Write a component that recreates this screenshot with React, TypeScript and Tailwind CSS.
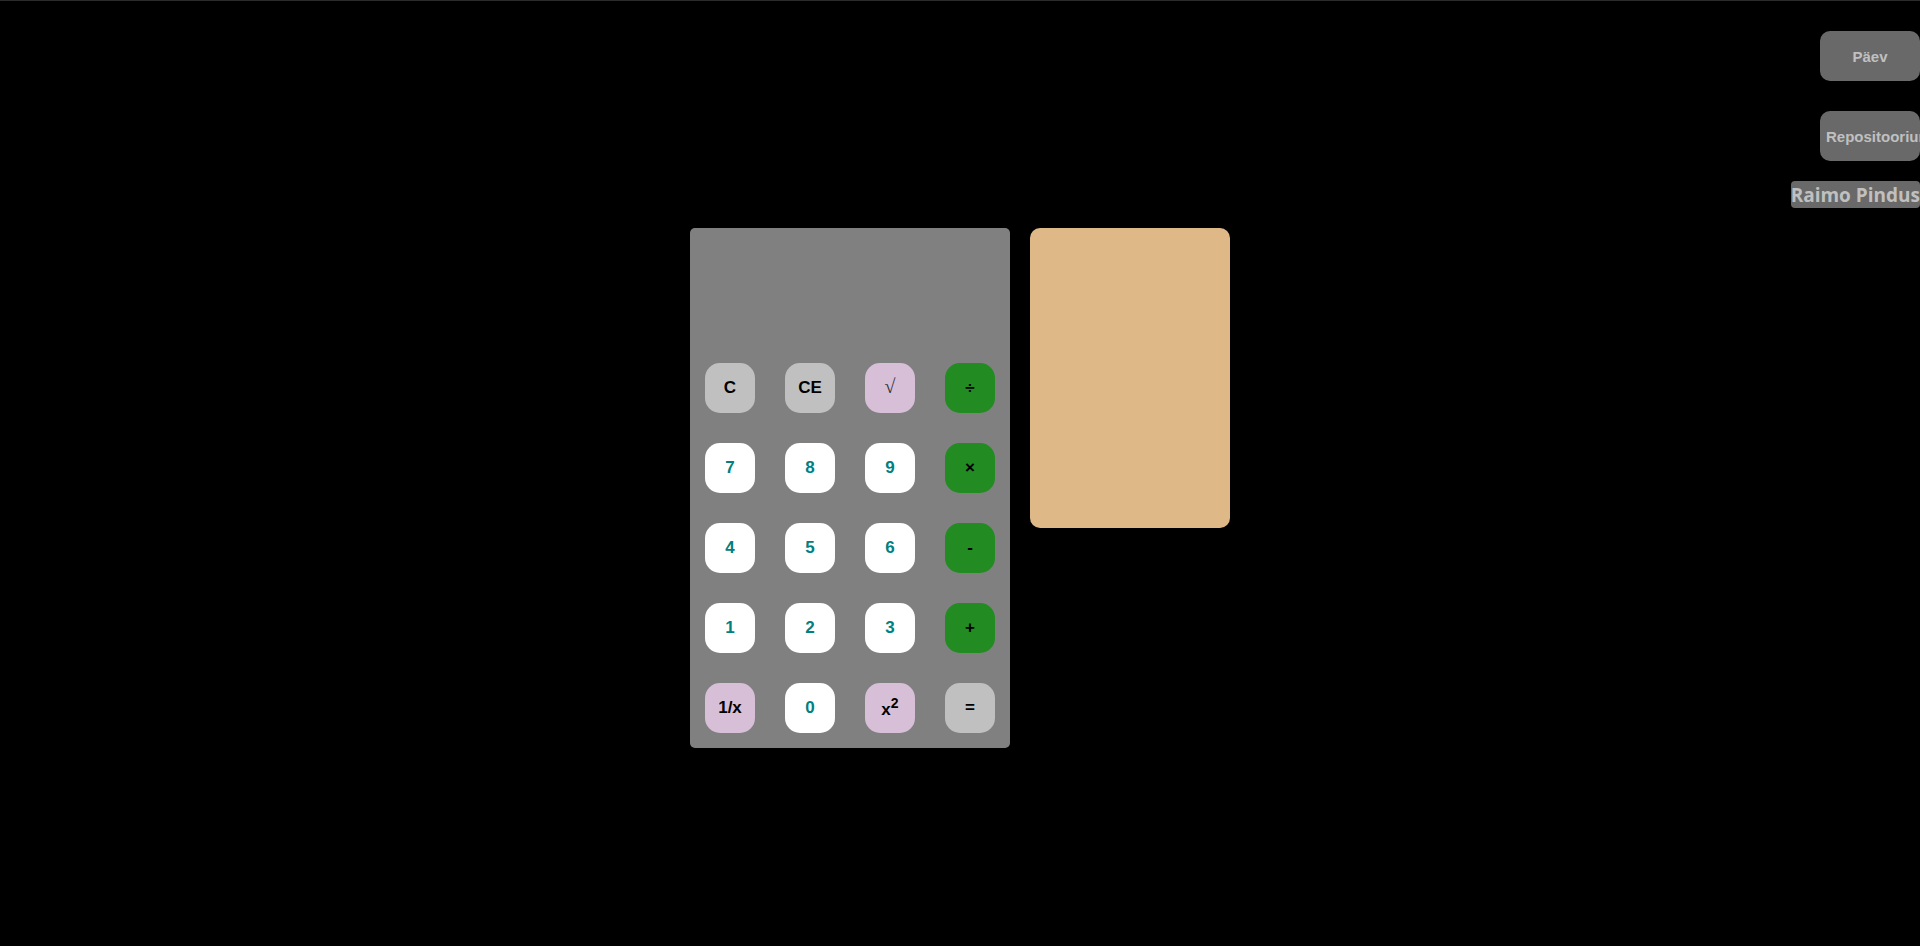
import { useState, type ReactNode } from "react";

type Key = { id: string; label: ReactNode; tone: string };

const clear = "bg-[#c0c0c0] text-black";
const digit = "bg-white text-[#008080]";
const special = "bg-[#d8bfd8] text-black";
const operator = "bg-[#228b22] text-black";

const keys: Key[] = [
  { id: "C", label: "C", tone: clear },
  { id: "CE", label: "CE", tone: clear },
  {
    id: "sqrt",
    label: <span className="font-['Liberation_Serif',serif] text-[20px] leading-none font-normal text-[#333333]">√</span>,
    tone: special,
  },
  { id: "/", label: "÷", tone: operator },
  { id: "7", label: "7", tone: digit },
  { id: "8", label: "8", tone: digit },
  { id: "9", label: "9", tone: digit },
  { id: "*", label: "×", tone: operator },
  { id: "4", label: "4", tone: digit },
  { id: "5", label: "5", tone: digit },
  { id: "6", label: "6", tone: digit },
  { id: "-", label: "-", tone: operator },
  { id: "1", label: "1", tone: digit },
  { id: "2", label: "2", tone: digit },
  { id: "3", label: "3", tone: digit },
  { id: "+", label: "+", tone: operator },
  { id: "inverse", label: "1/x", tone: special },
  { id: "0", label: "0", tone: digit },
  {
    id: "square",
    label: (
      <>
        x<sup className="static align-super text-sm leading-5">2</sup>
      </>
    ),
    tone: special,
  },
  { id: "=", label: "=", tone: clear },
];

function compute(a: number, b: number, op: string): number {
  if (op === "+") return a + b;
  if (op === "-") return a - b;
  if (op === "*") return a * b;
  return a / b;
}

export default function App() {
  const [display, setDisplay] = useState("");
  const [pending, setPending] = useState<{ value: number; op: string } | null>(null);
  const [history, setHistory] = useState<string[]>([]);
  const [day, setDay] = useState(false);

  function press(id: string) {
    const value = Number(display);
    if (/^\d$/.test(id)) setDisplay(display + id);
    else if (id === "C") {
      setDisplay("");
      setPending(null);
    } else if (id === "CE") setDisplay("");
    else if (id === "sqrt") setDisplay(String(Math.sqrt(value)));
    else if (id === "inverse") setDisplay(String(1 / value));
    else if (id === "square") setDisplay(String(value * value));
    else if (id === "=") {
      if (!pending) return;
      const result = compute(pending.value, value, pending.op);
      setHistory([...history, `${pending.value} ${pending.op} ${value} = ${result}`]);
      setDisplay(String(result));
      setPending(null);
    } else {
      setPending({ value, op: id });
      setDisplay("");
    }
  }

  return (
    <div
      className={`relative min-h-screen overflow-x-hidden border-t border-[#2b2b2b] pt-[227px] font-['Liberation_Sans',Arial,sans-serif] ${day ? "bg-white" : "bg-black"}`}
    >
      <nav className="absolute top-0 right-0 flex flex-col items-end pt-[30px] text-[#c0c0c0]">
        <button
          type="button"
          onClick={() => setDay(!day)}
          className="h-[50px] w-[100px] rounded-[10px] bg-[#696969] pt-0.5 text-[15px] font-bold"
        >
          {day ? "Öö" : "Päev"}
        </button>
        <a
          href="#repositoorium"
          className="mt-[30px] flex h-[50px] w-[100px] items-center rounded-[10px] bg-[#696969] px-1.5 pt-0.5 text-[15px] font-bold"
        >
          Repositoorium
        </a>
        <p className="mt-5 rounded-[4px] bg-[#696969] pt-0.5 font-['Open_Sans',sans-serif] text-[19px] leading-[25px] font-bold">
          Raimo Pindus
        </p>
      </nav>

      <main className="flex items-start justify-center gap-5">
        <section className="w-80 rounded-[5px] bg-[#808080]">
          <output className="flex h-[120px] items-end justify-end px-4 text-3xl text-black">
            {display}
          </output>
          <div className="grid grid-cols-4 gap-[30px] p-[15px]">
            {keys.map((key) => (
              <button
                key={key.id}
                type="button"
                onClick={() => press(key.id)}
                className={`h-[50px] rounded-[15px] text-[17px] font-bold ${key.tone}`}
              >
                {key.label}
              </button>
            ))}
          </div>
        </section>
        <aside className="h-[300px] w-[200px] overflow-y-auto rounded-[10px] bg-[#deb887] text-black">
          {history.map((line, index) => (
            <p key={index} className="px-3 py-1">
              {line}
            </p>
          ))}
        </aside>
      </main>
    </div>
  );
}
